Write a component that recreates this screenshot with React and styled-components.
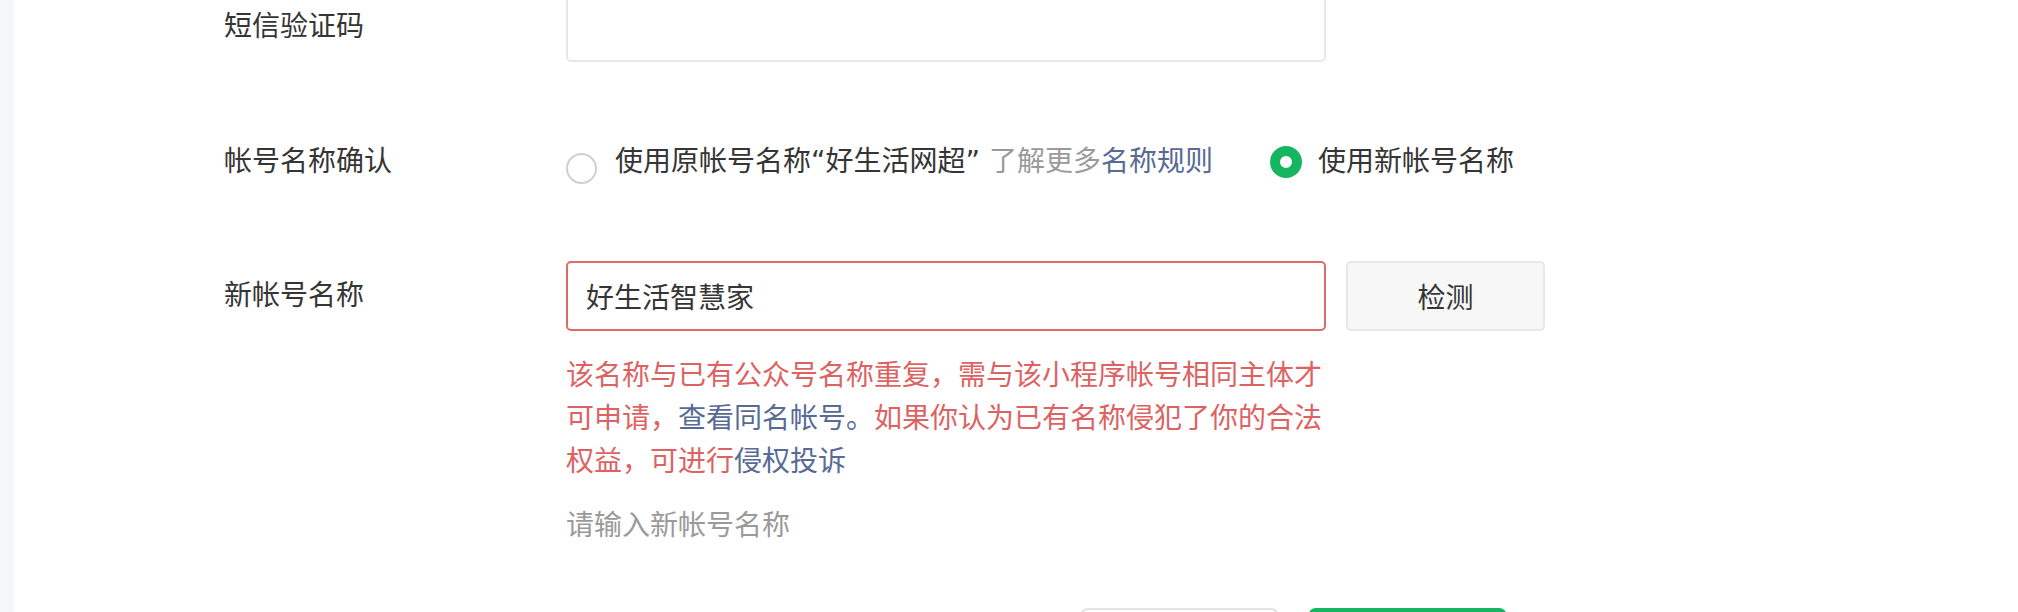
import React, { useState } from "react";
import styled, { createGlobalStyle } from "styled-components";

const GlobalStyle = createGlobalStyle`
    html, body {
        margin: 0;
        padding: 0;
        overflow: hidden;
        background: #ffffff;
    }
    body {
        font-family: "Liberation Sans", "Noto Sans CJK SC", sans-serif;
        font-size: 28px;
        color: #353535;
    }
`;

const App = () => {
    const [useNew, setUseNew] = useState(true);
    const [newName, setNewName] = useState("好生活智慧家");

    return (
        <>
            <GlobalStyle />
            <Page>
                <SideStrip />
                <Main>
                    <Form>
                        <Row>
                            <Label $h={70}>短信验证码</Label>
                            <Field>
                                <TextInput />
                            </Field>
                        </Row>

                        <Row $gap={78}>
                            <Label $h={43}>帐号名称确认</Label>
                            <RadioGroup>
                                <Option $space={57} onClick={() => setUseNew(false)}>
                                    <Radio $checked={!useNew} $shift={13} />
                                    <OptionText>
                                        使用原帐号名称
                                        <Quoted>“好生活网超” </Quoted>
                                        <Muted>了解更多</Muted>
                                        <Link>名称规则</Link>
                                    </OptionText>
                                </Option>
                                <Option onClick={() => setUseNew(true)}>
                                    <Radio $checked={useNew} />
                                    <OptionText $gap={16}>使用新帐号名称</OptionText>
                                </Option>
                            </RadioGroup>
                        </Row>

                        <Row $gap={78}>
                            <Label $h={70}>新帐号名称</Label>
                            <Field>
                                <InputLine>
                                    <TextInput
                                        $error
                                        value={newName}
                                        onChange={(e) => setNewName(e.target.value)}
                                    />
                                    <CheckButton>检测</CheckButton>
                                </InputLine>
                                <ErrorText>
                                    该名称与已有公众号名称重复，需与该小程序帐号相同主体才可申请，
                                    <Link>查看同名帐号。</Link>
                                    如果你认为已有名称侵犯了你的合法权益，可进行
                                    <Link>侵权投诉</Link>
                                </ErrorText>
                                <Hint>请输入新帐号名称</Hint>
                            </Field>
                        </Row>

                        <Footer>
                            <FooterButton>取消</FooterButton>
                            <FooterButton $primary>确定</FooterButton>
                        </Footer>
                    </Form>
                </Main>
            </Page>
        </>
    );
};

export default App;

const Page = styled.div`
    display: flex;
    min-height: 100vh;
`;
const SideStrip = styled.div`
    width: 14px;
    flex-shrink: 0;
    background: #f4f6f8;
`;
const Main = styled.div`
    flex: 1;
    padding-left: 210px;
`;
const Form = styled.div`
    display: flex;
    flex-direction: column;
    margin-top: -8px;
`;
const Row = styled.div`
    display: grid;
    grid-template-columns: 342px 1fr;
    align-items: start;
    margin-top: ${(p) => p.$gap || 0}px;
`;
const Label = styled.div`
    line-height: ${(p) => p.$h}px;
    color: #353535;
    white-space: nowrap;
`;
const Field = styled.div`
    display: flex;
    flex-direction: column;
`;
const InputLine = styled.div`
    display: flex;
    align-items: flex-start;
`;
const TextInput = styled.input`
    box-sizing: border-box;
    width: 760px;
    height: 70px;
    padding: 0 18px;
    border: ${(p) => (p.$error ? "2px solid #de6b6b" : "2px solid #e7e7e7")};
    border-radius: 5px;
    background: #ffffff;
    font: inherit;
    color: #353535;
    outline: none;
`;
const CheckButton = styled.button`
    box-sizing: border-box;
    width: 199px;
    height: 70px;
    margin-left: 20px;
    border: 2px solid #e8e8e8;
    border-radius: 5px;
    background: #f7f7f7;
    font: inherit;
    color: #353535;
    cursor: pointer;
`;
const RadioGroup = styled.div`
    display: flex;
    align-items: center;
    height: 43px;
    white-space: nowrap;
`;
const Option = styled.label`
    display: flex;
    align-items: center;
    margin-right: ${(p) => p.$space || 0}px;
    line-height: 43px;
    cursor: pointer;
`;
const Radio = styled.span`
    box-sizing: border-box;
    width: ${(p) => (p.$checked ? 32 : 31)}px;
    height: ${(p) => (p.$checked ? 32 : 31)}px;
    flex-shrink: 0;
    margin-top: ${(p) => p.$shift || 0}px;
    border-radius: 50%;
    background: #ffffff;
    border: ${(p) => (p.$checked ? "10px solid #15b562" : "2px solid #cfcfcf")};
`;
const OptionText = styled.span`
    margin-left: ${(p) => p.$gap || 18}px;
    color: #353535;
`;
const Quoted = styled.span`
    font-family: "DejaVu Sans", "Noto Sans CJK SC", sans-serif;
`;
const Muted = styled.span`
    color: #9a9a9a;
`;
const Link = styled.span`
    color: #576b95;
    cursor: pointer;
`;
const ErrorText = styled.div`
    width: 760px;
    margin-top: 23px;
    line-height: 43px;
    color: #dd6262;
`;
const Hint = styled.div`
    margin-top: 21px;
    line-height: 43px;
    color: #9a9a9a;
`;
const Footer = styled.div`
    display: flex;
    gap: 29px;
    margin-top: 61px;
    padding-left: 856px;
`;
const FooterButton = styled.button`
    box-sizing: border-box;
    width: 199px;
    height: 72px;
    border-radius: 8px;
    border: 2px solid ${(p) => (p.$primary ? "#15b562" : "#e3e3e3")};
    background: ${(p) => (p.$primary ? "#15b562" : "#ffffff")};
    color: ${(p) => (p.$primary ? "#ffffff" : "#353535")};
    font: inherit;
`;
